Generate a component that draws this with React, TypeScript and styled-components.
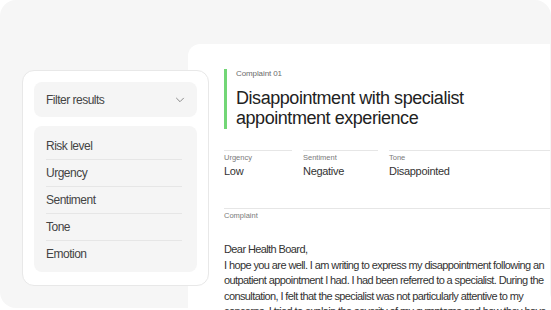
import React from "react";
import styled, { createGlobalStyle } from "styled-components";

const Global = createGlobalStyle`
  html, body { margin: 0; padding: 0; background: #ffffff; }
  body { font-family: "Liberation Sans", Arial, sans-serif; color: #2b2b2b; -webkit-font-smoothing: antialiased; }
  * { box-sizing: border-box; }
`;

const Stage = styled.div`
  width: 551px;
  height: 310px;
  overflow: hidden;
  background: #ffffff;
`;

const Backdrop = styled.div`
  position: relative;
  width: 551px;
  height: 308px;
  background: #f6f6f6;
  border-radius: 16px;
  padding: 44px 1px 0 188px;
`;

const Panel = styled.section`
  background: #ffffff;
  border-radius: 12px 0 0 0;
  height: 290px;
  padding: 25px 0 0 36px;
  overflow: hidden;
`;

const Heading = styled.header`
  border-left: 3px solid #72d676;
  padding-left: 9px;
  padding-bottom: 1px;
`;

const Eyebrow = styled.div`
  font-size: 8px;
  line-height: 10px;
  color: #6b6b6b;
  letter-spacing: -0.1px;
`;

const Title = styled.h1`
  margin: 9px 0 0;
  font-weight: 400;
  font-size: 18px;
  line-height: 20px;
  letter-spacing: -0.45px;
  color: #222222;
`;

const Fields = styled.div`
  display: grid;
  grid-template-columns: 68px 75px 1fr;
  column-gap: 11px;
  margin-top: 21px;
  height: 58px;
`;

const Field = styled.div`
  border-top: 1px solid #e6e6e6;
  padding-top: 2px;
`;

const FieldLabel = styled.div`
  font-size: 7.5px;
  line-height: 10px;
  color: #7a7a7a;
`;

const FieldValue = styled.div`
  margin-top: 1px;
  font-size: 11px;
  line-height: 14px;
  letter-spacing: -0.3px;
  color: #333333;
`;

const Complaint = styled.div`
  border-top: 1px solid #e6e6e6;
  padding-top: 2px;
`;

const Body = styled.div`
  margin: 21px 0 0;
  font-size: 11px;
  line-height: 15.5px;
  letter-spacing: -0.6px;
  color: #333333;
`;

const Line = styled.p`
  margin: 0;
  white-space: nowrap;
`;

const FilterCard = styled.aside`
  position: absolute;
  left: 22px;
  top: 70px;
  width: 187px;
  height: 216px;
  background: #ffffff;
  border: 1px solid #e8e8e8;
  border-radius: 12px;
  padding: 11px;
  display: flex;
  flex-direction: column;
  gap: 9px;
`;

const FilterHeader = styled.button`
  all: unset;
  flex-shrink: 0;
  height: 35px;
  border-radius: 8px;
  background: #f5f5f5;
  display: flex;
  align-items: center;
  justify-content: space-between;
  padding: 0 12px 0 12px;
  font-family: "Liberation Sans", Arial, sans-serif;
  font-size: 12px;
  letter-spacing: -0.5px;
  color: #444444;
`;

const FilterList = styled.ul`
  list-style: none;
  margin: 0;
  border-radius: 8px;
  background: #f5f5f5;
  padding: 6px 15px 5px 12px;
`;

const FilterItem = styled.li`
  height: 27px;
  display: flex;
  align-items: center;
  font-size: 12px;
  letter-spacing: -0.5px;
  color: #444444;
  & + & {
    border-top: 1.5px solid #e6e6e6;
  }
`;

const Chevron = () => (
  <svg width="10" height="6" viewBox="0 0 10 6" fill="none">
    <path d="M1.5 1.2l3.5 3.5 3.5-3.5" stroke="#8a8a8a" strokeWidth="1" strokeLinecap="round" strokeLinejoin="round" />
  </svg>
);

const fields = [
  { label: "Urgency", value: "Low" },
  { label: "Sentiment", value: "Negative" },
  { label: "Tone", value: "Disappointed" },
];

const filters = ["Risk level", "Urgency", "Sentiment", "Tone", "Emotion"];

const letter = [
  "Dear Health Board,",
  "I hope you are well. I am writing to express my disappointment following an",
  "outpatient appointment I had. I had been referred to a specialist. During the",
  "consultation, I felt that the specialist was not particularly attentive to my",
  "concerns. I tried to explain the severity of my symptoms and how they have",
];

export default function App() {
  return (
    <>
      <Global />
      <Stage>
        <Backdrop>
          <Panel>
            <Heading>
              <Eyebrow>Complaint 01</Eyebrow>
              <Title>
                Disappointment with specialist
                <br />
                appointment experience
              </Title>
            </Heading>
            <Fields>
              {fields.map((f) => (
                <Field key={f.label}>
                  <FieldLabel>{f.label}</FieldLabel>
                  <FieldValue>{f.value}</FieldValue>
                </Field>
              ))}
            </Fields>
            <Complaint>
              <FieldLabel>Complaint</FieldLabel>
              <Body>
                {letter.map((l) => (
                  <Line key={l}>{l}</Line>
                ))}
              </Body>
            </Complaint>
          </Panel>
          <FilterCard>
            <FilterHeader>
              Filter results
              <Chevron />
            </FilterHeader>
            <FilterList>
              {filters.map((f) => (
                <FilterItem key={f}>{f}</FilterItem>
              ))}
            </FilterList>
          </FilterCard>
        </Backdrop>
      </Stage>
    </>
  );
}
